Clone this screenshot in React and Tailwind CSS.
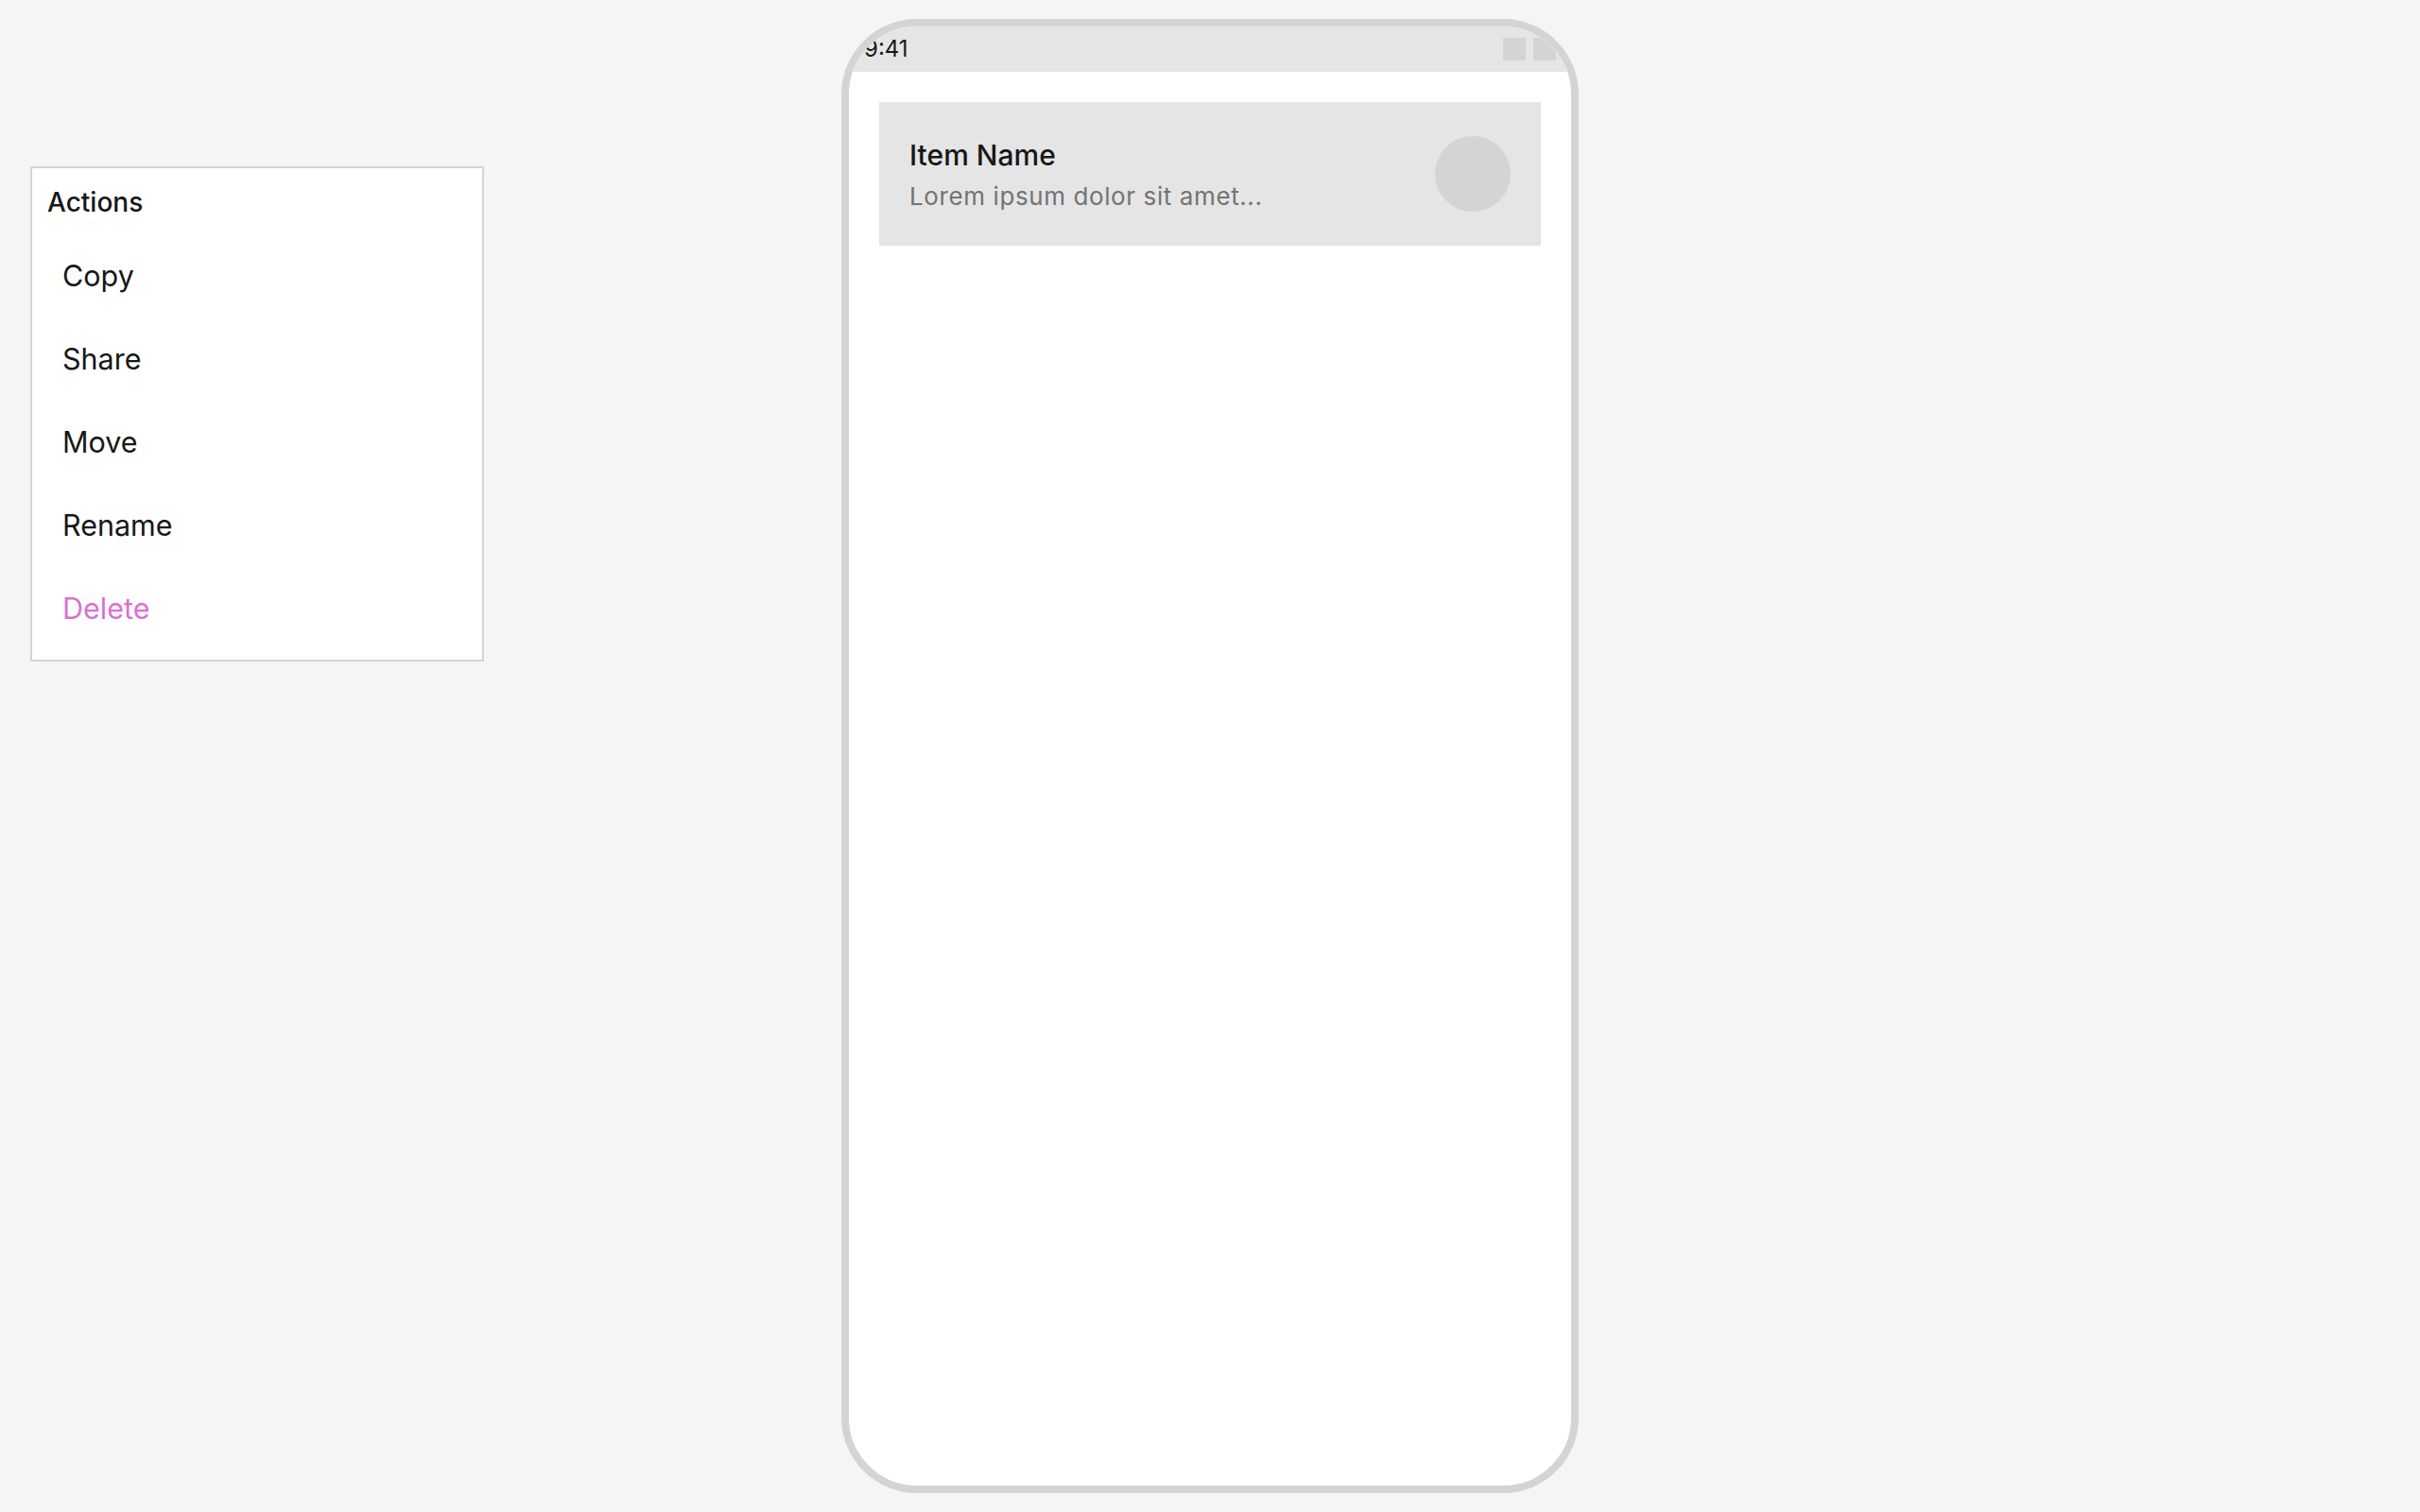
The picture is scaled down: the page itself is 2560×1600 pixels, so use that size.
import React from "react";

const font = { fontFamily: "Inter, 'Noto Sans', sans-serif" };

function ActionMenu() {
  const items = ["Copy", "Share", "Move", "Rename"];
  return (
    <div className="absolute left-[32px] top-[176px] w-[480px] border-2 border-[#d4d4d4] bg-white px-[16px] pt-[16px] pb-[10px]">
      <div className="h-[40px] flex items-center text-[28px] font-medium text-[#171717] leading-[40px]">
        Actions
      </div>
      <div className="mt-[14px] flex flex-col">
        {items.map((t) => (
          <div
            key={t}
            className="h-[88px] flex items-center px-[16px] text-[30.5px] leading-[48px] text-[#171717]"
          >
            {t}
          </div>
        ))}
        <div className="h-[88px] flex items-center px-[16px] text-[30.5px] leading-[48px] text-[#da70d6]">
          Delete
        </div>
      </div>
    </div>
  );
}

function Phone() {
  return (
    <div className="w-[780px] h-[1560px] border-8 border-[#d4d4d4] rounded-[80px] bg-white overflow-hidden flex flex-col">
      <div className="h-[48px] shrink-0 bg-[#e5e5e5] flex items-center justify-between px-[16px]">
        <span className="text-[24px] leading-[32px] text-[#171717]">9:41</span>
        <div className="flex gap-[8px]">
          <div className="w-[24px] h-[24px] bg-[#d4d4d4]" />
          <div className="w-[24px] h-[24px] bg-[#d4d4d4]" />
        </div>
      </div>
      <div className="p-[32px]">
        <div className="bg-[#e5e5e5] p-[32px] flex items-center justify-between">
          <div className="flex flex-col">
            <span className="text-[30px] leading-[48px] font-medium text-[#171717]">Item Name</span>
            <span className="text-[26px] leading-[40px] tracking-[0.6px] text-[#737373]">
              Lorem ipsum dolor sit amet...
            </span>
          </div>
          <div className="w-[80px] h-[80px] rounded-full bg-[#d4d4d4]" />
        </div>
      </div>
    </div>
  );
}

export default function App() {
  return (
    <div style={font} className="relative w-full h-screen bg-[#f5f5f5] flex items-center justify-center">
      <ActionMenu />
      <Phone />
    </div>
  );
}
